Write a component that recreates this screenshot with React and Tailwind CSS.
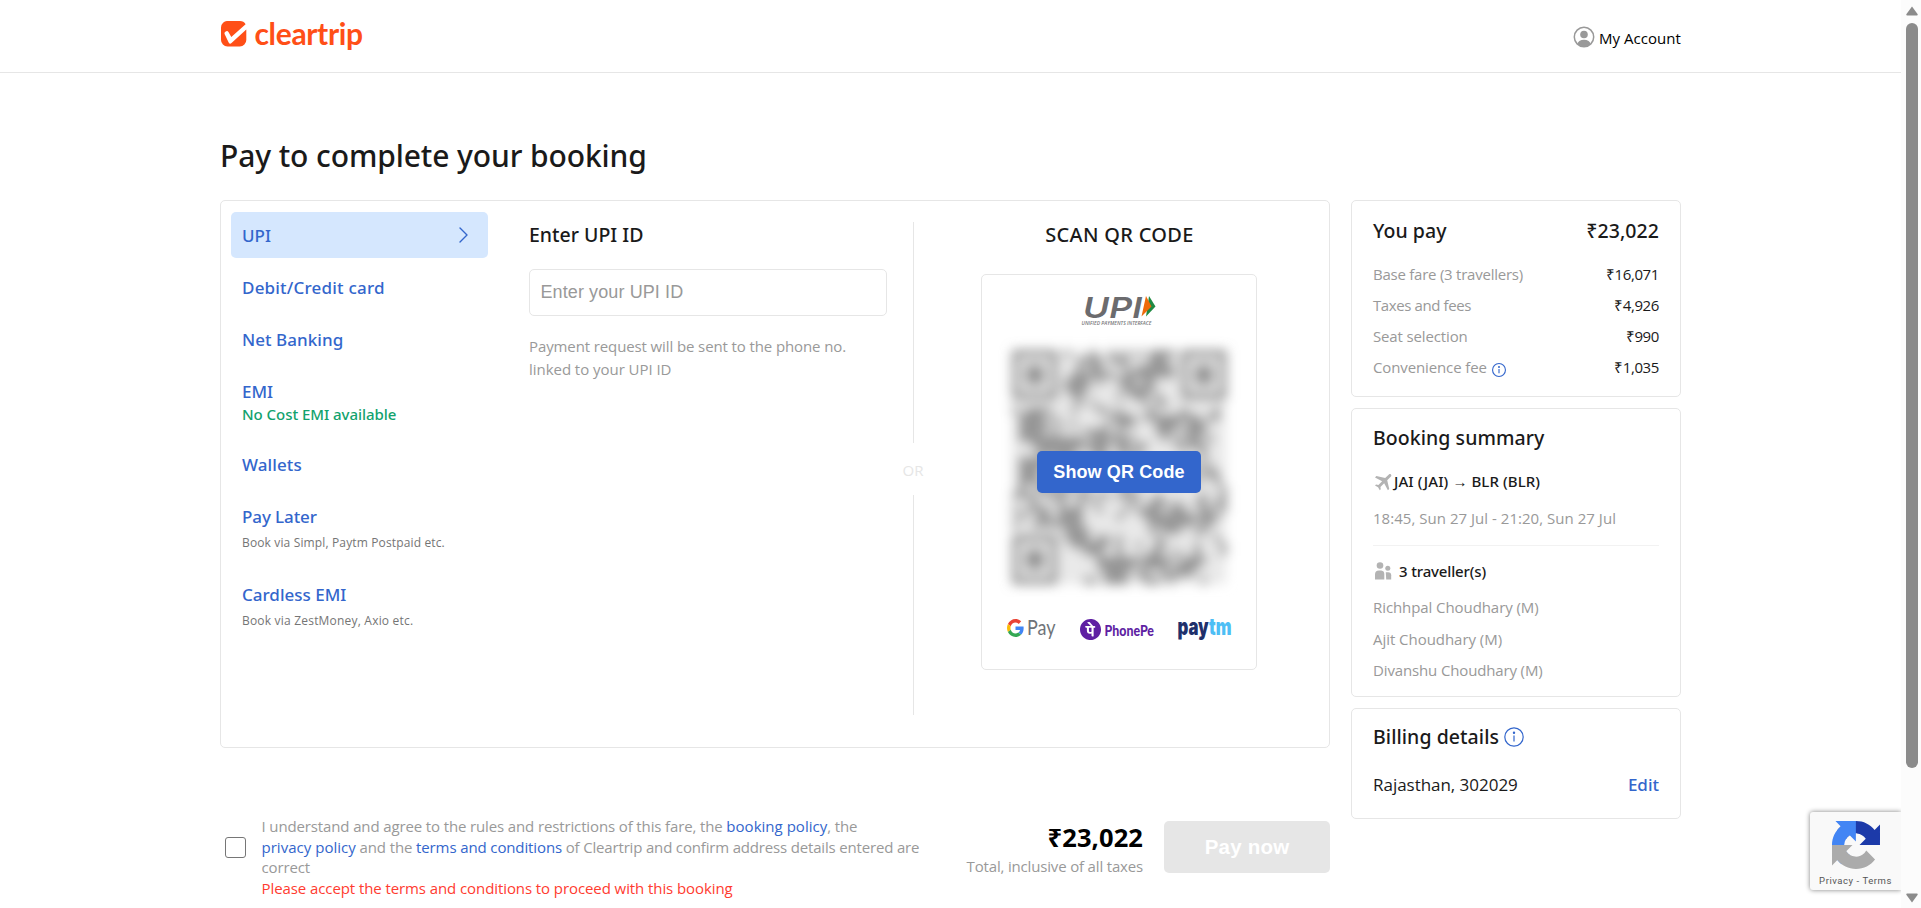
import React from 'react';
import { MdFlight } from 'react-icons/md';
import { SiPhonepe } from 'react-icons/si';

const COLS = 33;
const DARK = [[12.3, 1.6], [9.8, 5], [23, 10.2], [2.3, 10.6], [4.6, 12.7], [12.7, 12], [16.6, 9.4], [9.2, 24.4], [22.4, 23.4], [25, 24], [21.4, 29.5], [26.3, 29.9], [12.6, 27.2], [27.6, 11], [3, 16.2], [16.4, 30.6], [29.7, 23], [22, 1.5], [19.5, 5.5]];
const LIGHT = [[24.2, 5.2], [10.2, 9.1], [19.8, 10.6], [13.6, 5], [22.3, 13], [14.6, 22.6], [12, 24.4], [19.6, 25.6], [30.5, 24.7], [8.9, 29.9], [26.2, 26.5], [0.8, 13.6], [31, 13], [31.5, 30]];

function finder(c, r) {
  const d = Math.max(Math.abs(c - 3), Math.abs(r - 3));
  return d !== 2 && d <= 3;
}

function isDark(c, r) {
  if (c < 8 && r < 8) return finder(c, r);
  if (c > 24 && r < 8) return finder(c - 26, r);
  if (c < 8 && r > 24) return finder(c, r - 26);
  const near = (p) => Math.exp(-((c - p[0]) ** 2 + (r - p[1]) ** 2) / 3.2);
  const field = DARK.reduce((s, p) => s + near(p), 0) - LIGHT.reduce((s, p) => s + near(p), 0);
  const n = Math.sin(c * 12.9898 + r * 78.233) * 43758.5453;
  return n - Math.floor(n) < 0.46 + field * 0.75;
}

const MODULES = [];
for (let r = 0; r < COLS; r++) for (let c = 0; c < COLS; c++) if (isDark(c, r)) MODULES.push([c, r]);

function QrCode() {
  return (
    <svg width="244" height="264" viewBox="-13 -13 244 264" className="block">
      <defs>
        <filter id="soft" x="-10%" y="-10%" width="120%" height="120%">
          <feGaussianBlur stdDeviation="6" />
        </filter>
      </defs>
      <g filter="url(#soft)" transform="translate(2 4)">
        <rect x="0" y="0" width="214" height="234" fill="#e9e9e9" />
        <g fill="#949494">
          {MODULES.map(([c, r]) => (
            <rect key={`${c}-${r}`} x={c * 6.5} y={r * 7.1} width="6.6" height="7.2" />
          ))}
        </g>
      </g>
    </svg>
  );
}

function InfoIcon({ size, stroke }) {
  return (
    <svg width={size} height={size} viewBox="0 0 20 20" fill="none" stroke="#3366cc" strokeWidth={stroke}>
      <circle cx="10" cy="10" r="9.2" />
      <path d="M10 8.6v6" />
      <circle cx="10" cy="5.8" r="0.6" fill="#3366cc" />
    </svg>
  );
}

function Logo() {
  return (
    <div className="flex items-center">
      <svg width="26" height="26" viewBox="0 0 26 26">
        <path d="M7 0h12a6.500 6.500 0 0 1 5.600 3.300L10.300 16.100 7.600 11.200a2.200 2.200 0 0 0-3.900 2l4.100 8.500a1.700 1.700 0 0 0 2.700.4L25.300 8.600V19a6.500 6.500 0 0 1-6.500 6.500H6.500A6.500 6.500 0 0 1 0 19V6.500A6.500 6.500 0 0 1 7 0z" fill="#ff4f17" />
      </svg>
      <span className="ml-[7.5px] -mt-px font-['Lato',sans-serif] font-bold text-[30px] leading-[34px] tracking-[-0.35px] text-[#ff4f17]">cleartrip</span>
    </div>
  );
}

function UpiLogo() {
  return (
    <svg width="76" height="32" viewBox="0 0 76 32" className="overflow-visible">
      <text x="2" y="22.500" textLength="59" lengthAdjust="spacingAndGlyphs" fontFamily="Inter, sans-serif" fontStyle="italic" fontWeight="600" fontSize="29" fill="#6b6b6e">UPI</text>
      <path d="M68 1l6.500 10.500-9.500 10z" fill="#1f8a43" />
      <path d="M65 1l5.500 10.500-10 10z" fill="#ee6a0a" />
      <text x="0.500" y="30" textLength="70" lengthAdjust="spacingAndGlyphs" fontFamily="'Open Sans', sans-serif" fontStyle="italic" fontWeight="600" fontSize="5.500" fill="#77777a">UNIFIED PAYMENTS INTERFACE</text>
    </svg>
  );
}

function GPay() {
  return (
    <div className="flex w-[50px] items-center">
      <svg width="17" height="18" viewBox="0 0 48 48" preserveAspectRatio="none" className="-mt-[3px]">
        <path fill="#ea4335" d="M24 9.500c3.540 0 6.710 1.220 9.210 3.600l6.850-6.850C35.900 2.380 30.470 0 24 0 14.620 0 6.510 5.380 2.560 13.220l7.980 6.190C12.430 13.720 17.740 9.500 24 9.500z" />
        <path fill="#4285f4" d="M46.980 24.550c0-1.570-.15-3.090-.38-4.550H24v9.020h12.940c-.58 2.960-2.260 5.480-4.780 7.180l7.730 6c4.510-4.180 7.090-10.360 7.090-17.650z" />
        <path fill="#fbbc05" d="M10.530 28.590c-.48-1.450-.76-2.990-.76-4.590s.27-3.140.76-4.590l-7.980-6.190C.92 16.460 0 20.120 0 24c0 3.880.92 7.540 2.560 10.780l7.970-6.190z" />
        <path fill="#34a853" d="M24 48c6.480 0 11.930-2.130 15.890-5.810l-7.730-6c-2.150 1.450-4.920 2.300-8.160 2.300-6.260 0-11.570-4.220-13.470-9.910l-7.980 6.190C6.510 42.620 14.620 48 24 48z" />
      </svg>
      <svg width="30" height="26" viewBox="0 0 30 26" className="ml-[3px] overflow-visible">
        <text x="0" y="19" textLength="28.500" lengthAdjust="spacingAndGlyphs" fontFamily="Lato, sans-serif" fontSize="22" fill="#6f7378">Pay</text>
      </svg>
    </div>
  );
}

function PhonePe() {
  return (
    <div className="flex w-[76px] items-center gap-[3px]">
      <SiPhonepe className="ml-px size-[21px] text-[#5f1fa3]" />
      <svg width="51" height="22" viewBox="0 0 51 22" className="overflow-visible">
        <text x="0.500" y="17.500" textLength="49.500" lengthAdjust="spacingAndGlyphs" fontFamily="Lato, sans-serif" fontWeight="900" fontSize="14.500" fill="#5f1fa3">PhonePe</text>
      </svg>
    </div>
  );
}

function Paytm() {
  return (
    <svg width="54" height="26" viewBox="0 0 54 26" className="overflow-visible">
      <text x="0.500" y="18.500" textLength="54" lengthAdjust="spacingAndGlyphs" fontFamily="Inter, sans-serif" fontWeight="900" fontSize="22.500" fill="#20306b">
        pay<tspan fill="#4dbef5">tm</tspan>
      </text>
    </svg>
  );
}

function Method({ title, spacing, children, className }) {
  return (
    <div className={`flex flex-col px-[11px] pt-[12px] ${className}`}>
      <span className={`font-['Noto_Sans',sans-serif] text-[17px] font-medium leading-6 text-[#3366cc] ${spacing || ''}`}>{title}</span>
      {children}
    </div>
  );
}

function MethodList() {
  return (
    <nav className="flex w-[257px] flex-col gap-[6px]">
      <div className="flex h-[46px] items-center justify-between rounded-[5px] bg-[#d5e7fe] pl-[11px] pr-[19px]">
        <span className="pt-[2px] font-['Noto_Sans',sans-serif] text-[17px] font-medium leading-6 text-[#3366cc]">UPI</span>
        <svg width="10" height="16" viewBox="0 0 10 16" fill="none" stroke="#3366cc" strokeWidth="1.4" strokeLinecap="round" strokeLinejoin="round">
          <path d="M1 1l7 7-7 7" />
        </svg>
      </div>
      <Method title="Debit/Credit card" spacing="tracking-[0.2px]" className="h-[46px]" />
      <Method title="Net Banking" spacing="tracking-[0.05px]" className="h-[46px]" />
      <Method title="EMI" className="h-[67px]">
        <span className="-mt-px font-['Noto_Sans',sans-serif] text-[15px] font-medium leading-[22px] tracking-[-0.05px] text-[#12a26d]">No Cost EMI available</span>
      </Method>
      <Method title="Wallets" spacing="tracking-[0.1px]" className="h-[46px]" />
      <Method title="Pay Later" spacing="tracking-[-0.1px]" className="h-[72px]">
        <span className="mt-[4px] text-[12px] leading-5 tracking-[0.14px] text-[#757575]">Book via Simpl, Paytm Postpaid etc.</span>
      </Method>
      <Method title="Cardless EMI" className="h-[72px]">
        <span className="mt-[4px] text-[12px] leading-5 tracking-[0.2px] text-[#757575]">Book via ZestMoney, Axio etc.</span>
      </Method>
    </nav>
  );
}

function PaymentCard() {
  return (
    <section className="flex h-[548px] w-[1110px] rounded-[5px] border border-[#e6e6e6] pl-[10px] pt-[11px]">
      <MethodList />
      <div className="ml-[41px] flex w-[358px] flex-col">
        <h2 className="mt-[10px] font-['Noto_Sans',sans-serif] text-[19.5px] font-medium leading-[26px] text-[#1a1a1a]">Enter UPI ID</h2>
        <div className="mt-[21px] flex h-[47px] items-center rounded-[5px] border border-[#e6e6e6] pl-[10.5px]">
          <span className="font-['Liberation_Sans',sans-serif] text-[18px] tracking-[0.1px] text-[#999999]">Enter your UPI ID</span>
        </div>
        <p className="mt-[19px] text-[15px] leading-[23px] tracking-[-0.11px] text-[#999999]">
          Payment request will be sent to the phone no.<br /><span className="tracking-[-0.04px]">linked to your UPI ID</span>
        </p>
      </div>
      <div className="ml-[15px] mt-[10px] flex h-[493px] w-[22px] flex-col items-center">
        <div className="h-[221px] w-px bg-[#e6e6e6]" />
        <span className="flex h-[52px] items-center pt-[2px] text-[15px] text-[#e6e6e6]">OR</span>
        <div className="flex-1 w-px bg-[#e6e6e6]" />
      </div>
      <div className="ml-[57px] flex w-[275px] flex-col items-center">
        <h2 className="mt-[10px] pl-[2px] font-['Noto_Sans',sans-serif] text-[20px] font-medium leading-[26px] tracking-[0.3px] text-[#1a1a1a]">SCAN QR CODE</h2>
        <div className="mt-[26px] flex h-[396px] w-[276px] flex-col items-center rounded-[5px] border-[1.5px] border-[#e6e6e6]">
          <div className="mt-[20px] flex h-[32px] justify-center"><UpiLogo /></div>
          <div className="mt-[6px] grid h-[264px] w-[244px] place-items-center">
            <div className="col-start-1 row-start-1"><QrCode /></div>
            <button className="z-10 col-start-1 row-start-1 mt-[14px] h-[42px] w-[164px] rounded-[5px] bg-[#3366cc] pl-px font-['Liberation_Sans',sans-serif] text-[18px] font-bold tracking-[0.12px] text-white">Show QR Code</button>
          </div>
          <div className="mt-[19px] flex h-[26px] w-[225px] items-center justify-between pl-px">
            <GPay />
            <PhonePe />
            <Paytm />
          </div>
        </div>
      </div>
    </section>
  );
}

const FARES = [
  { label: 'Base fare (3 travellers)', value: '₹16,071', cls: 'tracking-[-0.24px]' },
  { label: 'Taxes and fees', value: '₹4,926', cls: 'tracking-[-0.4px]' },
  { label: 'Seat selection', value: '₹990', cls: 'tracking-[-0.14px]' },
  { label: 'Convenience fee', value: '₹1,035', cls: 'tracking-[-0.12px]', info: true },
];

function Heading({ children }) {
  return <h3 className="font-['Noto_Sans',sans-serif] text-[19.5px] font-medium leading-[26px] tracking-[0.06px] text-[#1a1a1a]">{children}</h3>;
}

function Sidebar() {
  return (
    <aside className="flex w-[330px] flex-col gap-[11px]">
      <section className="h-[197px] rounded-[5px] border border-[#e6e6e6] px-[21px] pt-[17px]">
        <div className="flex justify-between">
          <Heading>You pay</Heading>
          <Heading>₹23,022</Heading>
        </div>
        <div className="mt-[15px] flex flex-col text-[15px] leading-[31px]">
          {FARES.map((f) => (
            <div key={f.label} className="flex h-[31px] justify-between">
              <span className={`flex items-center gap-[5px] text-[#999999] ${f.cls}`}>
                {f.label}
                {f.info && <span className="mt-[5px]"><InfoIcon size={14} stroke={1.6} /></span>}
              </span>
              <span className="tracking-[-0.38px] text-[#1a1a1a]">{f.value}</span>
            </div>
          ))}
        </div>
      </section>
      <section className="h-[289px] rounded-[5px] border border-[#e6e6e6] px-[21px] pt-[16px]">
        <Heading>Booking summary</Heading>
        <div className="mt-[17px] flex h-[26px] items-center">
          <MdFlight className="-mr-px size-[23px] rotate-45 text-[#b3b3b3]" />
          <span className="-ml-px font-['Noto_Sans',sans-serif] text-[15px] font-medium tracking-[0.09px] text-[#1a1a1a]">JAI (JAI) → BLR (BLR)</span>
        </div>
        <p className="mt-[12px] h-[24px] text-[15px] leading-[24px] tracking-[0.03px] text-[#999999]">18:45, Sun 27 Jul - 21:20, Sun 27 Jul</p>
        <div className="mt-[15px] h-px bg-[#f2f2f2]" />
        <div className="mt-[12px] flex h-[26px] items-center">
          <svg width="18" height="18" viewBox="0 0 18 18" fill="#b3b3b3" className="ml-[1px]">
            <circle cx="6" cy="3.500" r="3.300" />
            <path d="M1 17.500v-5a4 4 0 0 1 4-4h2.300a3.500 3.500 0 0 1 3 3.500v5.500z" />
            <circle cx="13.800" cy="6.300" r="2.500" />
            <path d="M11.800 10.300h2.400a3 3 0 0 1 3 3v4.200h-5z" />
          </svg>
          <span className="ml-[7px] font-['Noto_Sans',sans-serif] text-[15px] font-medium tracking-[-0.15px] text-[#1a1a1a]">3 traveller(s)</span>
        </div>
        <div className="mt-[7px] flex flex-col text-[15px] leading-[32px] tracking-[-0.08px] text-[#999999]">
          <span>Richhpal Choudhary (M)</span>
          <span className="tracking-[-0.04px]">Ajit Choudhary (M)</span>
          <span className="-mt-px tracking-[-0.14px]">Divanshu Choudhary (M)</span>
        </div>
      </section>
      <section className="h-[111px] rounded-[5px] border border-[#e6e6e6] px-[21px] pt-[15px]">
        <div className="flex items-center gap-[5px]">
          <Heading>Billing details</Heading>
          <InfoIcon size={20} stroke={1.2} />
        </div>
        <div className="mt-[22px] flex justify-between text-[17px] leading-[26px]">
          <span className="tracking-[-0.03px] text-[#1a1a1a]">Rajasthan, 302029</span>
          <span className="font-['Noto_Sans',sans-serif] font-medium text-[#3366cc]">Edit</span>
        </div>
      </section>
    </aside>
  );
}

function Footer() {
  return (
    <div className="flex w-[1110px] items-start">
      <div className="ml-[5px] mt-[21px] size-[21px] rounded-[3px] border border-[#767676] bg-white" />
      <p className="ml-[15px] w-[680px] whitespace-nowrap pl-[0.5px] text-[15px] leading-[20.6px] tracking-[-0.12px] text-[#999999]">
        <span className="tracking-[-0.13px]">I understand and agree to the rules and restrictions of this fare, the <span className="tracking-[0.02px] text-[#3366cc]">booking policy</span>, the</span><br />
        <span className="tracking-[0.02px] text-[#3366cc]">privacy policy</span> and the <span className="text-[#3366cc]">terms and conditions</span><span className="tracking-[-0.17px]"> of Cleartrip and confirm address details entered are</span><br />
        correct<br />
        <span className="tracking-[-0.085px] text-[#ff3b30]">Please accept the terms and conditions to proceed with this booking</span>
      </p>
      <div className="mt-[6px] flex flex-1 flex-col items-end">
        <span className="font-['Noto_Sans',sans-serif] text-[25.5px] font-bold leading-[30px] tracking-[0.1px] text-black">₹23,022</span>
        <span className="mt-[3px] text-[15px] leading-[22px] tracking-[-0.17px] text-[#999999]">Total, inclusive of all taxes</span>
      </div>
      <button className="ml-[21px] mt-[5px] h-[52px] w-[166px] rounded-[5px] bg-[#e6e6e6] font-['Liberation_Sans',sans-serif] text-[20.5px] font-bold tracking-[0.2px] text-white">Pay now</button>
    </div>
  );
}

function Recaptcha() {
  return (
    <div className="absolute right-0 top-[812px] flex h-[78px] w-[91px] flex-col items-center rounded-l-[3px] bg-[#f9f9f9] pt-[9px] shadow-[0_0_5px_#808080]">
      <svg width="48" height="48" viewBox="0 0 64 64">
        <path fill="#1c3aa9" d="M64 31.955l-.033-1.370V4.687l-7.160 7.160C50.948 4.674 42.033.093 32.050.093c-10.389 0-19.622 4.960-25.458 12.640l11.736 11.860a15.550 15.550 0 0 1 4.754-5.334c2.050-1.600 4.952-2.906 8.968-2.906.485 0 .86.057 1.135.163 4.976.393 9.288 3.140 11.828 7.124l-8.307 8.307L64 31.953" />
        <path fill="#4285f4" d="M31.862.094l-1.370.033H4.594l7.160 7.160C4.580 13.147 0 22.060 0 32.046c0 10.389 4.960 19.622 12.640 25.458L24.500 45.768a15.550 15.550 0 0 1-5.334-4.754c-1.600-2.050-2.906-4.952-2.906-8.968 0-.485.057-.86.163-1.135.393-4.976 3.140-9.288 7.124-11.828l8.307 8.307L31.860.095" />
        <path fill="#ababab" d="M.001 32.045l.033 1.370v25.898l7.160-7.160c5.860 7.173 14.774 11.754 24.760 11.754 10.389 0 19.622-4.960 25.458-12.640l-11.736-11.860a15.550 15.550 0 0 1-4.754 5.334c-2.050 1.600-4.952 2.906-8.968 2.906-.485 0-.86-.057-1.135-.163-4.976-.393-9.288-3.140-11.828-7.124l8.307-8.307c-10.522.040-22.400.066-27.295-.005" />
      </svg>
      <span className="mt-[6px] whitespace-nowrap font-['Roboto',sans-serif] text-[9.5px] leading-3 tracking-[0.55px] text-[#555555]">Privacy - Terms</span>
    </div>
  );
}

export default function App() {
  return (
    <div className="flex h-[908px] w-[1921px] overflow-hidden bg-white font-['Open_Sans',sans-serif]">
      <div className="relative h-[908px] w-[1901px] overflow-hidden">
        <header className="flex h-[73px] items-start justify-between border-b border-[#e6e6e6] pl-[221px] pr-[220px]">
          <div className="pt-[17px]"><Logo /></div>
          <div className="flex items-center pt-[27px]">
            <svg width="22" height="22" viewBox="0 0 22 22" className="-mt-[2px]">
              <clipPath id="head"><circle cx="11" cy="11" r="9.500" /></clipPath>
              <circle cx="11" cy="11" r="9.700" fill="none" stroke="#999999" strokeWidth="1.500" />
              <circle cx="11" cy="8.500" r="3.800" fill="#999999" />
              <ellipse cx="11" cy="18.300" rx="6.500" ry="4.500" fill="#999999" clipPath="url(#head)" />
            </svg>
            <span className="ml-[4px] text-[15px] leading-[22px] tracking-[0.05px] text-black">My Account</span>
          </div>
        </header>
        <main className="pl-[220px]">
          <h1 className="mt-[63px] font-['Noto_Sans',sans-serif] text-[30px] font-medium leading-[40px] tracking-[-0.1px] text-[#1a1a1a]">Pay to complete your booking</h1>
          <div className="mt-[24px] flex gap-[21px]">
            <div className="flex flex-col">
              <PaymentCard />
              <div className="mt-[68px]"><Footer /></div>
            </div>
            <Sidebar />
          </div>
        </main>
        <Recaptcha />
      </div>
      <div className="flex w-[20px] flex-col items-center bg-[#fcfcfc] pl-px pt-[6px]">
        <svg width="12" height="10" viewBox="0 0 12 10"><path d="M6 0.500L11.500 8a1 1 0 0 1-.8 1.500H1.300A1 1 0 0 1 .5 8z" fill="#8b8b8b" /></svg>
        <div className="mt-[7px] h-[745px] w-[12px] rounded-full bg-[#8b8b8b]" />
        <svg width="12" height="10" viewBox="0 0 12 10" className="mt-[125px]"><path d="M6 9.500L.5 2a1 1 0 0 1 .8-1.500h9.400a1 1 0 0 1 .8 1.500z" fill="#8b8b8b" /></svg>
      </div>
    </div>
  );
}
